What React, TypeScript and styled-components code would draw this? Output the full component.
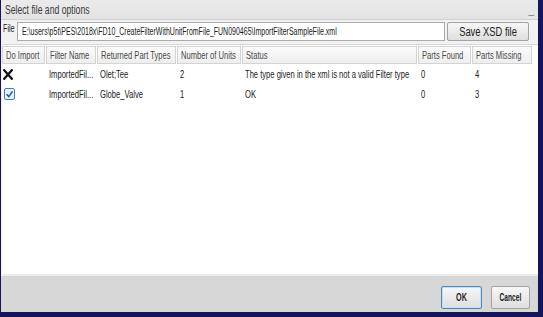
import React from "react";
import styled, { createGlobalStyle } from "styled-components";

const Global = createGlobalStyle`
  html, body { margin: 0; padding: 0; background: #14145a; }
  #root { width: 543px; height: 317px; overflow: hidden; }
  * { box-sizing: border-box; }
`;

const FONT = `"Liberation Sans", Arial, sans-serif`;

/* The dialog's UI font is very narrow; a horizontally condensed text run */
const Txt = styled.span<{ $origin?: string; $sx?: number }>`
  display: inline-block;
  white-space: nowrap;
  transform: scaleX(${(p) => p.$sx ?? 0.72});
  transform-origin: ${(p) => p.$origin ?? "left"} center;
`;

const Frame = styled.div`
  width: 543px;
  height: 317px;
  background: #15145c;
  padding: 0 5px 5px 1px;
  display: flex;
`;

const Window = styled.div`
  flex: 1;
  min-width: 0;
  display: flex;
  flex-direction: column;
  background: #f2f2f2;
  font-family: ${FONT};
  color: #222;
`;

const TitleBar = styled.div`
  height: 20px;
  flex: none;
  display: flex;
  align-items: center;
  justify-content: space-between;
  padding: 0 4px 0 4px;
  background: linear-gradient(#ebebeb, #e3e3e3);
  border-bottom: 1px solid #d0d0d0;
  font-size: 12px;
  color: #3a3a3a;
  overflow: hidden;
`;

const Minimize = styled.span`
  font-size: 10px;
  color: #777;
  margin-top: 1px;
`;

const FileRow = styled.div`
  display: flex;
  align-items: center;
  gap: 2px;
  padding: 0 9px 0 2px;
  height: 23px;
  flex: none;
  min-width: 0;
`;

const Label = styled.span`
  font-size: 10px;
  color: #222;
  align-self: flex-start;
  margin-top: 3px;
  width: 12px;
`;

const PathInput = styled.div`
  flex: 1;
  min-width: 0;
  height: 19px;
  border: 1px solid #ababab;
  background: #fff;
  font-size: 10px;
  display: flex;
  align-items: center;
  padding-left: 4px;
  overflow: hidden;
`;

const Button = styled.button<{ $w: number; $h?: number; $primary?: boolean; $bold?: boolean }>`
  width: ${(p) => p.$w}px;
  height: ${(p) => p.$h ?? 19}px;
  flex: none;
  display: flex;
  align-items: center;
  justify-content: center;
  overflow: hidden;
  font-family: ${FONT};
  font-size: ${(p) => (p.$bold ? 10 : 12)}px;
  color: #222;
  border: 1px solid ${(p) => (p.$primary ? "#4f87bd" : "#a3a3a3")};
  border-radius: 2px;
  background: linear-gradient(#f7f7f7, #dedede);
  box-shadow: ${(p) => (p.$primary ? "inset 0 0 0 1px #bfe0f5" : "none")};
  padding: 0;
  font-weight: ${(p) => (p.$bold ? 700 : 400)};
`;

const TableArea = styled.div`
  flex: 1;
  margin: 1px 0 0 1px;
  background: #fff;
  border-top: 1px solid #d8d8d8;
  border-bottom: 2px solid #ececec;
  display: flex;
  flex-direction: column;
  min-width: 0;
`;

const Grid = styled.div`
  display: grid;
  grid-template-columns: 43px 50px 79px 64px 175px 53px 60px;
  column-gap: 1px;
`;

const HeadCell = styled.div`
  height: 18px;
  margin-top: 1px;
  border: 1px solid #d4d4d4;
  background: linear-gradient(#fbfbfb, #eeeeee);
  font-size: 11px;
  color: #4a4a4a;
  display: flex;
  align-items: center;
  padding-left: 3px;
  overflow: hidden;
`;

const Cell = styled.div<{ $pad?: number }>`
  height: 20px;
  font-size: 11px;
  color: #222;
  display: flex;
  align-items: center;
  padding-left: ${(p) => p.$pad ?? 3}px;
  overflow: hidden;
`;

const Footer = styled.div`
  height: 36px;
  flex: none;
  background: #d7d7d7;
  display: flex;
  align-items: center;
  justify-content: flex-end;
  gap: 9px;
  padding: 6px 8px 0 0;
`;

const Cross = () => (
  <svg width="10" height="11" viewBox="0 0 10 11">
    <path d="M1.2 1.2 L8.8 9.8 M8.8 1.2 L1.2 9.8" stroke="#111" strokeWidth="2.3" strokeLinecap="square" />
  </svg>
);

const Check = () => (
  <svg width="11" height="12" viewBox="0 0 11 12">
    <rect x="0.5" y="0.5" width="10" height="11" rx="1.5" fill="#e8f3fc" stroke="#3d7fc0" />
    <path d="M2.6 6.2 L4.8 8.6 L8.5 3.4" fill="none" stroke="#1f5fa8" strokeWidth="1.6" />
  </svg>
);

const headers = ["Do Import", "Filter Name", "Returned Part Types", "Number of Units", "Status", "Parts Found", "Parts Missing"];

const rows = [
  { icon: <Cross />, pad: 1, name: "ImportedFil...", types: "Olet;Tee", units: "2", status: "The type given in the xml is not a valid Filter type", found: "0", missing: "4" },
  { icon: <Check />, pad: 2, name: "ImportedFil...", types: "Globe_Valve", units: "1", status: "OK", found: "0", missing: "3" },
];

const T = 0.69;

export default function App() {
  return (
    <>
      <Global />
      <Frame>
        <Window>
          <TitleBar>
            <Txt>Select file and options</Txt>
            <Minimize>_</Minimize>
          </TitleBar>
          <FileRow>
            <Label>
              <Txt>File</Txt>
            </Label>
            <PathInput>
              <Txt $sx={0.7}>E:\users\p5t\PES\2018x\FD10_CreateFilterWithUnitFromFile_FUN090465\ImportFilterSampleFile.xml</Txt>
            </PathInput>
            <Button $w={82}>
              <Txt $origin="center" $sx={0.78}>Save XSD file</Txt>
            </Button>
          </FileRow>
          <TableArea>
            <Grid>
              {headers.map((h) => (
                <HeadCell key={h}>
                  <Txt $sx={T}>{h}</Txt>
                </HeadCell>
              ))}
              {rows.map((r, i) => (
                <React.Fragment key={i}>
                  <Cell $pad={r.pad}>{r.icon}</Cell>
                  <Cell><Txt $sx={T}>{r.name}</Txt></Cell>
                  <Cell><Txt $sx={T}>{r.types}</Txt></Cell>
                  <Cell><Txt $sx={T}>{r.units}</Txt></Cell>
                  <Cell><Txt $sx={T}>{r.status}</Txt></Cell>
                  <Cell><Txt $sx={T}>{r.found}</Txt></Cell>
                  <Cell><Txt $sx={T}>{r.missing}</Txt></Cell>
                </React.Fragment>
              ))}
            </Grid>
          </TableArea>
          <Footer>
            <Button $w={41} $h={23} $primary $bold>
              <Txt $origin="center">OK</Txt>
            </Button>
            <Button $w={39} $h={23} $bold>
              <Txt $origin="center" $sx={0.66}>Cancel</Txt>
            </Button>
          </Footer>
        </Window>
      </Frame>
    </>
  );
}
